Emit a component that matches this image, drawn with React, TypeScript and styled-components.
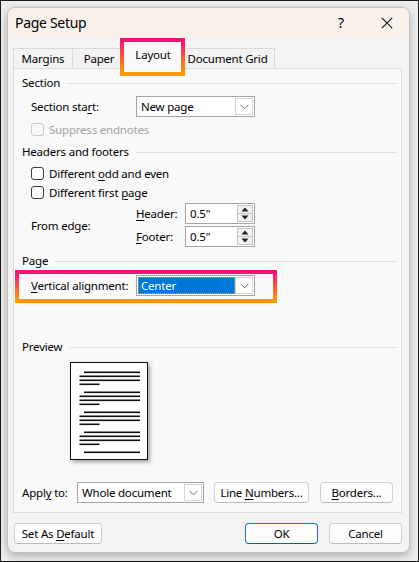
import React from 'react';
import styled, { createGlobalStyle, css } from 'styled-components';

const Global = createGlobalStyle`
  html, body { margin: 0; padding: 0; background: #eeeeee; }
  body { font-family: "Noto Sans", "Open Sans", sans-serif; font-size: 11.5px; letter-spacing: -0.2px; color: #000; }
  * { box-sizing: border-box; }
`;

const Screen = styled.div`
  width: 419px;
  height: 562px;
  border: 1px solid #1a1a1a;
  padding: 6px 0 0 6px;
  background: #eeeeee;
`;

const Dialog = styled.div`
  width: 403px;
  height: 546px;
  border: 1px solid #c2c2c2;
  border-radius: 8px;
  background: #f3f3f3;
  box-shadow: 0 3px 10px rgba(0, 0, 0, 0.28);
  overflow: hidden;
  display: flex;
  flex-direction: column;
`;

const TitleBar = styled.div`
  height: 29px;
  flex: none;
  display: flex;
  align-items: center;
  background: #f8f1eb;
  padding-left: 7px;
`;

const Title = styled.div`
  flex: 1;
  font-size: 14px;
  letter-spacing: -0.3px;
  line-height: 20px;
`;

const TitleButton = styled.div<{ $w: number }>`
  width: ${(p) => p.$w}px;
  height: 29px;
  display: flex;
  align-items: center;
  justify-content: center;
  font-size: 14px;
`;

const Body = styled.div`
  flex: 1;
  display: flex;
  flex-direction: column;
  padding: 0 7px 0 5px;
`;

const TabStrip = styled.div`
  height: 31px;
  display: flex;
  align-items: flex-end;
  padding-left: 1px;
`;

const Tab = styled.div<{ $w: number; $active?: boolean }>`
  position: relative;
  width: ${(p) => p.$w}px;
  height: 20px;
  border: 1px solid #d9d9d9;
  border-bottom: none;
  margin-left: -1px;
  background: #f3f3f3;
  display: flex;
  align-items: center;
  justify-content: center;
  line-height: 16px;
  ${(p) =>
    p.$active &&
    css`
      height: 28px;
      margin: 0 -2px -1px -3px;
      background: #f9f9f9;
      z-index: 1;
      padding-bottom: 2px;
    `}
`;

const Highlight = styled.span<{ $l: number; $t: number; $w: number; $h: number }>`
  position: absolute;
  left: ${(p) => p.$l}px;
  top: ${(p) => p.$t}px;
  width: ${(p) => p.$w}px;
  height: ${(p) => p.$h}px;
  border: 4px solid;
  border-image: linear-gradient(to bottom, #ff0f73, #ff9a00) 1;
  pointer-events: none;
  z-index: 3;
`;

const Panel = styled.div`
  height: 445px;
  border: 1px solid #dcdcdc;
  background: #f9f9f9;
  padding: 6px 4px 0 8px;
  display: flex;
  flex-direction: column;
`;

const GroupHeader = styled.div<{ $mt?: number }>`
  height: 16px;
  margin-top: ${(p) => p.$mt ?? 0}px;
  display: flex;
  align-items: center;
  line-height: 16px;
  &::after {
    content: '';
    flex: 1;
    height: 1px;
    background: #dedede;
    margin-left: 7px;
  }
`;

const Row = styled.div<{ $mt?: number; $h?: number; $indent?: number }>`
  position: relative;
  display: flex;
  align-items: center;
  height: ${(p) => p.$h ?? 21}px;
  margin-top: ${(p) => p.$mt ?? 0}px;
  padding-left: ${(p) => p.$indent ?? 9}px;
`;

const Label = styled.div<{ $w: number; $disabled?: boolean }>`
  width: ${(p) => p.$w}px;
  flex: none;
  color: ${(p) => (p.$disabled ? '#a3a3a3' : '#000')};
  white-space: nowrap;
`;

const U = styled.span`
  text-decoration: underline;
  text-underline-offset: 2px;
`;

const Box = styled.span<{ $disabled?: boolean }>`
  width: 13px;
  height: 13px;
  flex: none;
  border: 1px solid ${(p) => (p.$disabled ? '#c9c9c9' : '#3b3b3b')};
  border-radius: 3px;
  background: ${(p) => (p.$disabled ? '#f7f7f7' : '#ffffff')};
  margin-right: 5px;
`;

const CheckText = styled.span<{ $disabled?: boolean }>`
  color: ${(p) => (p.$disabled ? '#a3a3a3' : '#000')};
`;

const Select = styled.div<{ $w: number }>`
  width: ${(p) => p.$w}px;
  height: 21px;
  flex: none;
  border: 1px solid #a5a5a5;
  background: #ffffff;
  display: flex;
  align-items: stretch;
`;

const SelectValue = styled.div<{ $selected?: boolean }>`
  flex: 1;
  display: flex;
  align-items: center;
  padding-left: 4px;
  line-height: 16px;
  ${(p) =>
    p.$selected &&
    css`
      margin: 1px 0 1px 1px;
      padding-left: 3px;
      background: #0078d7;
      color: #ffffff;
      outline: 1px dotted #e89a3c;
      outline-offset: -1px;
    `}
`;

const Chevron = styled.div`
  width: 18px;
  flex: none;
  margin: 1px 1px 1px 0;
  border: 1px solid #d4d4d4;
  background: #ffffff;
  display: flex;
  align-items: center;
  justify-content: center;
`;

const EdgeBlock = styled.div`
  display: flex;
  align-items: center;
  margin-top: 2px;
  padding-left: 9px;
`;

const EdgeFields = styled.div`
  display: flex;
  flex-direction: column;
  gap: 2px;
`;

const FieldRow = styled.div`
  display: flex;
  align-items: center;
  height: 21px;
`;

const Spin = styled.div`
  width: 70px;
  height: 21px;
  border: 1px solid #a5a5a5;
  background: #fff;
  display: flex;
  align-items: center;
`;

const SpinValue = styled.div`
  flex: 1;
  padding-left: 4px;
  line-height: 16px;
`;

const SpinButtons = styled.div`
  width: 16px;
  height: 17px;
  margin-right: 1px;
  display: flex;
  flex-direction: column;
  border: 1px solid #c4c4c4;
  background: #f1f1f1;
`;

const SpinHalf = styled.div<{ $top?: boolean }>`
  flex: 1;
  display: flex;
  align-items: center;
  justify-content: center;
  ${(p) => p.$top && css`border-bottom: 1px solid #c4c4c4;`}
`;

const PreviewPage = styled.div`
  width: 78px;
  height: 98px;
  margin: 7px 0 0 48px;
  border: 1px solid #111;
  background: #fff;
  box-shadow: 2px 2px 4px rgba(0, 0, 0, 0.35);
`;

const Button = styled.button<{ $w: number; $primary?: boolean; $ml?: number }>`
  width: ${(p) => p.$w}px;
  height: 21px;
  flex: none;
  margin-left: ${(p) => p.$ml ?? 0}px;
  padding: 0;
  border: 1px solid ${(p) => (p.$primary ? '#1a6fc4' : '#d0d0d0')};
  border-bottom-color: ${(p) => (p.$primary ? '#0a5cb0' : '#bcbcbc')};
  border-radius: 4px;
  background: #fdfdfd;
  font-family: inherit;
  font-size: 11.5px;
  letter-spacing: -0.2px;
  color: #000;
  line-height: 16px;
`;

const Footer = styled.div`
  display: flex;
  align-items: center;
  margin-top: 10px;
  padding-left: 1px;
`;

const Spacer = styled.div`
  flex: 1;
`;

const ChevronIcon = () => (
  <svg width="9" height="6" viewBox="0 0 9 6">
    <path d="M0.5 0.8 L4.5 4.8 L8.5 0.8" fill="none" stroke="#6b6b6b" strokeWidth="1" />
  </svg>
);

const Arrow = ({ up }: { up?: boolean }) => (
  <svg width="8" height="5" viewBox="0 0 8 5">
    {up ? <path d="M4 0.5 L7.5 4.5 L0.5 4.5 Z" fill="#222" /> : <path d="M0.5 0.5 L7.5 0.5 L4 4.5 Z" fill="#222" />}
  </svg>
);

const PreviewLines = () => {
  const lines: React.ReactNode[] = [];
  for (let g = 0; g < 4; g++) {
    const y = 8.5 + g * 20;
    lines.push(<rect key={`a${g}`} x={13} y={y} width={56} height={1.6} fill="#111" />);
    lines.push(<rect key={`b${g}`} x={8.5} y={y + 4} width={60.5} height={1.6} fill="#111" />);
    lines.push(<rect key={`c${g}`} x={8.5} y={y + 8} width={60.5} height={1.6} fill="#111" />);
    lines.push(<rect key={`d${g}`} x={8.5} y={y + 12} width={20} height={1.6} fill="#111" />);
  }
  lines.push(<rect key="z" x={13} y={88.5} width={56} height={1.6} fill="#111" />);
  return (
    <svg width="76" height="96" viewBox="0 0 76 96" style={{ display: 'block' }}>
      {lines}
    </svg>
  );
};

export default function App() {
  return (
    <>
      <Global />
      <Screen>
        <Dialog>
          <TitleBar>
            <Title>Page Setup</Title>
            <TitleButton $w={46}>?</TitleButton>
            <TitleButton $w={45}>
              <svg width="12" height="12" viewBox="0 0 12 12">
                <path d="M0.8 0.8 L11.2 11.2 M11.2 0.8 L0.8 11.2" stroke="#111" strokeWidth="1.1" />
              </svg>
            </TitleButton>
          </TitleBar>
          <Body>
            <TabStrip>
              <Tab $w={60}>Margins</Tab>
              <Tab $w={54}>Paper</Tab>
              <Tab $w={60} $active>
                Layout
                <Highlight $l={-4} $t={-4} $w={65} $h={38} />
              </Tab>
              <Tab $w={95}>Document Grid</Tab>
            </TabStrip>
            <Panel>
              <GroupHeader>Section</GroupHeader>
              <Row $mt={5}>
                <Label $w={105}>
                  Section sta<U>r</U>t:
                </Label>
                <Select $w={119}>
                  <SelectValue>New page</SelectValue>
                  <Chevron>
                    <ChevronIcon />
                  </Chevron>
                </Select>
              </Row>
              <Row $mt={3} $h={18}>
                <Box $disabled />
                <CheckText $disabled>Suppress endnotes</CheckText>
              </Row>

              <GroupHeader $mt={6}>Headers and footers</GroupHeader>
              <Row $mt={4} $h={18}>
                <Box />
                <CheckText>
                  Different <U>o</U>dd and even
                </CheckText>
              </Row>
              <Row $mt={1} $h={18}>
                <Box />
                <CheckText>
                  Different first <U>p</U>age
                </CheckText>
              </Row>
              <EdgeBlock>
                <Label $w={105}>From edge:</Label>
                <EdgeFields>
                  <FieldRow>
                    <Label $w={49}>
                      <U>H</U>eader:
                    </Label>
                    <Spin>
                      <SpinValue>0.5"</SpinValue>
                      <SpinButtons>
                        <SpinHalf $top>
                          <Arrow up />
                        </SpinHalf>
                        <SpinHalf>
                          <Arrow />
                        </SpinHalf>
                      </SpinButtons>
                    </Spin>
                  </FieldRow>
                  <FieldRow>
                    <Label $w={49}>
                      <U>F</U>ooter:
                    </Label>
                    <Spin>
                      <SpinValue>0.5"</SpinValue>
                      <SpinButtons>
                        <SpinHalf $top>
                          <Arrow up />
                        </SpinHalf>
                        <SpinHalf>
                          <Arrow />
                        </SpinHalf>
                      </SpinButtons>
                    </Spin>
                  </FieldRow>
                </EdgeFields>
              </EdgeBlock>

              <GroupHeader $mt={6}>Page</GroupHeader>
              <Row $mt={6}>
                <Label $w={105}>
                  <U>V</U>ertical alignment:
                </Label>
                <Select $w={119}>
                  <SelectValue $selected>Center</SelectValue>
                  <Chevron>
                    <ChevronIcon />
                  </Chevron>
                </Select>
                <Highlight $l={-7} $t={-5} $w={262} $h={33} />
              </Row>

              <GroupHeader $mt={43}>Preview</GroupHeader>
              <PreviewPage>
                <PreviewLines />
              </PreviewPage>

              <Row $mt={22} $indent={0}>
                <Label $w={55}>
                  Appl<U>y</U> to:
                </Label>
                <Select $w={127}>
                  <SelectValue>Whole document</SelectValue>
                  <Chevron>
                    <ChevronIcon />
                  </Chevron>
                </Select>
                <Button $w={95} $ml={10}>
                  Line <U>N</U>umbers...
                </Button>
                <Button $w={73} $ml={11}>
                  <U>B</U>orders...
                </Button>
              </Row>
            </Panel>
            <Footer>
              <Button $w={88}>
                Set As <U>D</U>efault
              </Button>
              <Spacer />
              <Button $w={73} $primary>
                OK
              </Button>
              <Button $w={73} $ml={11}>
                Cancel
              </Button>
            </Footer>
          </Body>
        </Dialog>
      </Screen>
    </>
  );
}
